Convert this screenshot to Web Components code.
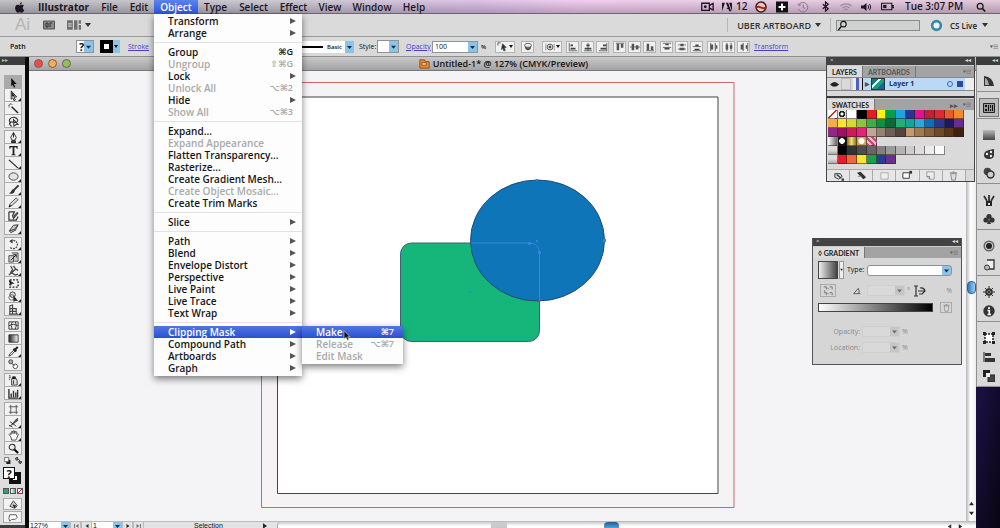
<!DOCTYPE html>
<html lang="en">
<head>
<meta charset="utf-8">
<title>Illustrator</title>
<style>
  body { margin: 0; background: #0d0820; color: #111; font-family: "Open Sans", "Noto Sans", sans-serif; font-size: 10px; }
</style>
</head>
<body>
<illustrator-app></illustrator-app>
<script>
const ICONS = {
  apple: '<path d="M8.600 3.100c-1 0-1.500.6-2.200.6S5 3.100 4 3.100C2.300 3.200 1.200 4.700 1.200 6.700c0 2.300 1.600 4.900 3 4.900.8 0 1.200-.5 2.200-.5s1.300.5 2.100.5c1.200 0 2.200-1.700 2.600-2.900-2.200-1-2-3.700-.1-4.500-.6-.8-1.500-1.100-2.400-1.100zM6.200 2.900C6.200 1.400 7.300.4 8.500.2 8.700 1.600 7.500 2.900 6.200 2.900z" fill="currentColor"/>',
  camera: '<path d="M.7 3h7v6.500h-7zM8 5l3.200-1.800v6L8 7.500" fill="none" stroke="currentColor" stroke-width="1.200"/><circle cx="4" cy="6.200" r="1.300" fill="currentColor"/>',
  adobe: '<path d="M0 11V1h3.500zM12 11V1H8.500zM4.700 1h2.600L11 11H8.700l-1-2.500H5.500L7 6.500z" fill="currentColor"/>',
  globe: '<circle cx="6" cy="6" r="5" fill="#e8c9c0" stroke="#402020" stroke-width="1.600"/><path d="M1 5.500c4-2.500 6 2.500 10 0v2c-4 2.500-6-2.500-10 0z" fill="#b32018"/>',
  spaces: '<path d="M0 .5h12v11H0z" fill="#111"/><path d="M6 2.500v7M2.500 6h7" stroke="#e6d5e3" stroke-width="2"/><path d="M4.500 2v8M7.500 2v8" stroke="#111"/><path d="M6 3v6" stroke="#fff" stroke-width="2"/><path d="M3 6h6" stroke="#fff" stroke-width="2"/>',
  clock: '<path d="M2 3.500A4.800 4.800 0 1 1 1.500 8M1 2.500l1 2.200 2-1M6.200 3.500V6.500L8 7.500" fill="none" stroke="#8b7b8a"/>',
  bt: '<path d="M3 3.500l6 5L6 11V1l3 2.500-6 5" fill="none" stroke="currentColor" stroke-width="1.300"/>',
  wifi: '<path d="M.5 5a8 8 0 0 1 11 0M2.500 7a5 5 0 0 1 7 0M4.300 9a2.500 2.500 0 0 1 3.400 0" fill="none" stroke="#9b8c9a" stroke-width="1.200"/>',
  vol: '<path d="M1 4.500h2.500L6.500 2v8L3.500 7.500H1z" fill="currentColor"/><path d="M8 4.200q1.300 1.800 0 3.600M9.700 3q2 3 0 6" fill="none" stroke="currentColor"/>',
  batt: '<path d="M.5 3h9.500v6H.5zM10.500 5H12v2h-1.500z" fill="none" stroke="currentColor"/><path d="M2 4.500h3v3H2z" fill="currentColor"/>',
  search: '<circle cx="5" cy="5" r="3.500" fill="none" stroke="currentColor" stroke-width="1.500"/><path d="M7.500 7.500l3.500 4" stroke="currentColor" stroke-width="2"/>',
  glass: '<circle cx="7" cy="4.500" r="3" fill="none" stroke="currentColor" stroke-width="1.200"/><path d="M4.800 6.800L1.500 11" stroke="currentColor" stroke-width="1.500"/>',
  select: '<path d="M3.500 1l6 6.500-3 .2L8 11l-1.500.6L5.200 8.500 3.500 10z" fill="#111"/>',
  direct: '<path d="M3.500 1l6 6.500-3 .2L8 11l-1.500.6L5.200 8.500 3.500 10z" fill="#fff" stroke="#222"/><path d="M4 2l4 5H4z" fill="#222"/>',
  wand: '<path d="M4 4l7 7" stroke="#222" stroke-width="1.600"/><path d="M3 0v2M0 3h2M1 1l1 1M5 1L4 2M1 5l1-1" stroke="#555"/>',
  lasso: '<path d="M3 8C-.5 4 3 1 7 1.500s5 5 1 5.500-5-2-6 .5 1 2.500 2 4M6 4l5 5-2 .3L6.500 11z" fill="none" stroke="#333" stroke-width="1.200"/>',
  pen: '<path d="M6 .5L9 6 7.500 9h-3L3 6zM4 9.500h4V12H4z" fill="#eee" stroke="#222"/><path d="M6 1v5" stroke="#222"/><path d="M4 10h4v2H4z" fill="#222"/>',
  type: '<path d="M1.500 1h9v3h-1q0-1.500-1.500-1.500H7V9.500q0 1 1.500 1v.8h-5v-.8q1.500 0 1.500-1v-7H4Q2.500 2.500 2.500 4h-1z" fill="#222"/>',
  line: '<path d="M1 2l10 9" stroke="#222" stroke-width="1.300"/>',
  ellipse: '<ellipse cx="6" cy="6" rx="5" ry="4" fill="#e4e4e4" stroke="#444"/>',
  brush: '<path d="M11.500 1.500L6 7" stroke="#333" stroke-width="2"/><path d="M6.500 5.500q2 2 0 4T1 10q2 0 2.500-2t3-2.500z" fill="#333"/>',
  pencil: '<path d="M1 11l1.500-4L9 1l2 2-6.500 6z" fill="#ddd" stroke="#444"/><path d="M1 11l1-2.500L3.500 10z"/>',
  blob: '<path d="M1 2h6L5 6l1 3 5-6M1 2v9h8l2-4" fill="none" stroke="#333" stroke-width="1.300"/><path d="M5 9l1-3 4-4 1 1-4 5z" fill="#555"/>',
  eraser: '<path d="M1.500 8.500L6 2.500 11 2 8 8l-5 2.500z" fill="#ccc" stroke="#333"/><path d="M1.500 8.500L7 7l4-5M7 7l1 1" stroke="#333" fill="none"/>',
  rotate: '<path d="M3 2.500A4.500 4.500 0 1 1 2 8.500" fill="none" stroke="#444" stroke-width="1.300" stroke-dasharray="2 1"/><path d="M5 0L1.500 2.500 5 5z" fill="#333"/>',
  scale: '<path d="M1 4h5v7H1zM4 1h7v9H7" fill="#ccc" stroke="#444"/><path d="M3 9l6-6M9 3v3M9 3H6" stroke="#222"/>',
  warp: '<path d="M1 11L8 5M3 1l2 4-2 3 5 3 3-1M6 1l2 3 3 2" fill="none" stroke="#444" stroke-width="1.400"/>',
  free: '<path d="M2 2h9v8H2z" fill="none" stroke="#222" stroke-width="1.500" stroke-dasharray="2 1.500"/><path d="M1 2l6 4-3 .5L3 9z" fill="#222"/>',
  shape: '<circle cx="5" cy="4" r="3" fill="#ddd" stroke="#333"/><circle cx="4" cy="7" r="3" fill="none" stroke="#666"/><path d="M6 5l5 6-3-.5L6 12z" fill="#222"/>',
  graph: '<path d="M2 11V2l3-1v10M5 5h4v6M1 11h10M2 5h3M2 8h7" fill="none" stroke="#444" stroke-width="1.200"/>',
  mesh: '<path d="M1 2h10v8H1zM4.500 2q-2 4 0 8M8 2q2 4 0 8M1 6q5-2.500 10 0" fill="#eee" stroke="#333"/>',
  grad: '<linearGradient id="a"><stop stop-color="#222"/><stop offset="1" stop-color="#fff"/></linearGradient><path d="M1 2h10v8H1z" fill="url(#a)" stroke="#333"/>',
  drop: '<path d="M1 11l1-2.500L7 4l1 1-4.500 5z" fill="#eee" stroke="#333"/><path d="M6 3l3 3M8 4l2.500-3" stroke="#222" stroke-width="2.400"/>',
  blend: '<circle cx="3" cy="3" r="2.200" fill="#aaa" stroke="#444"/><circle cx="8" cy="8" r="2.500" fill="#fff" stroke="#444"/><path d="M4 5l3 2" stroke="#444"/>',
  spray: '<path d="M4 4h5l1 2v5H4z" fill="#ddd" stroke="#333"/><path d="M5 4V2h3v2M1 1h2M1 3h2M1 5h1M6 6v4" stroke="#333"/>',
  bars: '<path d="M1 1v10h10M3.500 10V6M6 10V3M8.500 10V5M10.500 10V2" stroke="#333" stroke-width="1.500" fill="none"/>',
  board: '<path d="M3 1v10M9 1v10M1 3h10M1 9h10" stroke="#555"/>',
  slice: '<path d="M1 11L9 2l2-1v3L6 8z" fill="#555"/><path d="M2 5l7 5M1 9l4 2" stroke="#333"/>',
  hand: '<path d="M3 7L1 5l1-1 1.500 1V2L5 1.500 5.500 4V1H7l.5 3L8 1.500l1.500.5V5l1-1 .8 1L9.500 9l-1 2H4z" fill="#fff" stroke="#444"/>',
  zoom: '<circle cx="4.500" cy="4.500" r="3.200" fill="#eee" stroke="#333" stroke-width="1.200"/><path d="M7 7l4 4" stroke="#111" stroke-width="2.400"/>',
  solid: '<path d="M3 8l4-6 4 5q-1 3-3 3z" fill="#ccc" stroke="#444"/><path d="M6 6l4 1-2 3z" fill="#222"/>',
  screen: '<path d="M3 3h7l1 3-2 2H5l-2 2-1-3z" fill="#fff" stroke="#555"/>',
  br: '<path d="M.5 2h11v8H.5z" fill="#8a8a8a" stroke="#555"/><path d="M3 4h2v4H3zM7 8V4h2" fill="none" stroke="#333"/>',
  layout: '<path d="M0 2h5v8H0zM6 2h3v8H6zM10 2h2v3h-2zM10 6h2v4h-2z" fill="#707070"/><path d="M1 5h3M1 7h3" stroke="#ccc"/>',
  ring: '<circle cx="6" cy="6" r="4" fill="#e8f3f7" stroke="#3689a3" stroke-width="2.400"/>',
  similar: '<path d="M1 2h3M1 2v3M6 3l4 4-2 .3 1 3-1.500.5-1-2.800L5 9.300z" fill="#222" stroke="#555"/>',
  mask: '<path d="M2 4q0 6 4 6t4-6z" fill="#555"/><ellipse cx="6" cy="4" rx="4" ry="2.500" fill="#eee" stroke="#555"/>',
  recolor: '<circle cx="6" cy="6" r="3.500" fill="#ddd" stroke="#444"/><path d="M1 2v8M11 2v8" stroke="#888"/><circle cx="6" cy="6" r="1.500" fill="#444"/>',
  al1: '<path d="M1.500 1v10M2 10.500h9" stroke="#555"/><path d="M3 3h3v2H3zM3 7h6v2H3z" fill="#444"/>',
  al2: '<path d="M6 1v10M1 10.500h10" stroke="#555"/><path d="M4 3h4v2H4zM2 7h8v2H2z" fill="#444"/>',
  al3: '<path d="M10.500 1v10M1 10.500h10" stroke="#555"/><path d="M6 3h4v2H6zM3 7h7v2H3z" fill="#444"/>',
  al4: '<path d="M1 1.500h10" stroke="#555"/><path d="M2 2h3v8H2zM7 2h3v5H7z" fill="#555"/>',
  al5: '<path d="M0 6h12" stroke="#555"/><path d="M2 2h3v8H2zM7 4h3v5H7z" fill="#555"/>',
  al6: '<path d="M1 10.500h10" stroke="#555"/><path d="M2 2h3v8H2zM7 5h3v5H7z" fill="#555"/>',
  di1: '<path d="M1 1.500h10M1 6.500h10" stroke="#555"/><path d="M4 2h4v2H4zM3 7h6v2H3z" fill="#444"/>',
  di2: '<path d="M1 3.500h10M1 8.500h10" stroke="#777"/><path d="M4 2h4v3H4zM3 7h6v3H3z" fill="#555"/>',
  di3: '<path d="M1 5.500h10M1 10.500h10" stroke="#555"/><path d="M4 3h4v2H4zM3 8h6v2H3z" fill="#444"/>',
  di4: '<path d="M2 1v10M7.500 1v10" stroke="#444"/><path d="M2 3h3v6H2zM8 4h2v4H8z" fill="#555"/>',
  di5: '<path d="M3.500 1v10M8.500 1v10" stroke="#444"/><path d="M2 3h3v6H2zM7 4h3v4H7z" fill="#555"/>',
  di6: '<path d="M5 1v10M10.500 1v10" stroke="#444"/><path d="M2 3h3v6H2zM8 4h2v4H8z" fill="#555"/>',
  menu: '<path d="M0 4h4L2 7zM5 3h7M5 5.500h7M5 8h7" stroke="#777" fill="#555"/>',
  guide: '<path d="M1 11V1q9 1 10 10z" fill="#333"/><path d="M2 10V3q3 1 4 7z" fill="#aaa"/>',
  swatch: '<path d="M.5 1.500h11v9H.5z" fill="#999" stroke="#222"/><path d="M2 3h2v2H2zM2 7h2v2H2zM5 3h1v6H5zM7 3h1v3H7zM9 3h1v6H9zM7 7h1v2H7z" fill="#111"/>',
  stroke: '<linearGradient id="s" x2="0" y2="1"><stop stop-color="#bbb"/><stop offset="1" stop-color="#444"/></linearGradient><path d="M0 1h12v10H0z" fill="url(#s)"/>',
  palette: '<path d="M1 7q0-4 5-5l5-1v6q0 4-5 4T1 7z" fill="#333"/><circle cx="4" cy="6" r="1.200" fill="#eee"/><circle cx="8" cy="4" r="1.200" fill="#eee"/><circle cx="8" cy="8" r="1.200" fill="#eee"/>',
  transp: '<circle cx="4.500" cy="4.500" r="3.800" fill="#444"/><circle cx="7.500" cy="7.500" r="3.500" fill="#ccc" stroke="#333" stroke-width="1.400"/>',
  brushes: '<path d="M3 7h6v5H3z" fill="#222"/><path d="M5 9h2v2H5z" fill="#ddd"/><path d="M4 7L1 2M6 7V1M8 7l3-5" stroke="#333" stroke-width="1.800"/>',
  club: '<circle cx="6" cy="3.500" r="2.600" fill="#333"/><circle cx="3" cy="7" r="2.600" fill="#333"/><circle cx="9" cy="7" r="2.600" fill="#333"/><path d="M4 11l2-5 2 5z" fill="#333"/>',
  look: '<circle cx="6" cy="6" r="4.800" fill="#ccc" stroke="#666" stroke-width="1.500"/><circle cx="6" cy="6" r="3" fill="#222"/>',
  styles: '<path d="M4 1h7v9H5" fill="#eee" stroke="#333" stroke-width="1.300"/><circle cx="4" cy="8.500" r="2.500" fill="#bbb" stroke="#333"/>',
  nav: '<circle cx="6" cy="6" r="3" fill="none" stroke="#333" stroke-width="1.500"/><path d="M6 0v12M0 6h12M2 2l8 8M10 2l-8 8" stroke="#333"/>',
  info: '<circle cx="6" cy="6" r="5.700" fill="#333"/><path d="M6 2v2M4.500 5.500H6.300V9.500M4.500 9.500h3.500" stroke="#fff" stroke-width="1.600" fill="none"/>',
  transform: '<path d="M2 2h8v8H2z" fill="#fff" stroke="#222" stroke-width="1.500" stroke-dasharray="2 1"/><path d="M0 0h3v3H0zM9 0h3v3H9zM0 9h3v3H0zM9 9h3v3H9z" fill="#222"/>',
  align: '<path d="M1 1v10" stroke="#222"/><path d="M2 2h6v3H2zM2 7h10v4H2z" fill="#333"/>',
  path: '<path d="M0 0h7v7H0z" fill="#222"/><path d="M5 5h7v7H5z" fill="#444" stroke="#222"/><path d="M3 3h4v4H3z" fill="#eee"/>',
  doc: '<path d="M1 2h5l1 2h4v7H1z" fill="#f09030" stroke="#8a4510"/><path d="M3 5h5v3H3z" fill="#f8c890" stroke="#a05010"/>',
  eye: '<path d="M0 6q6-7 12 0-6 6-12 0z" fill="#222"/>',
  libs: '<path d="M2 4h6l2 3-4 3-4-2z" fill="#ddd" stroke="#333"/><path d="M4 5l5 4M10 10h2v1h-2z" stroke="#333" stroke-width="1.300"/>',
  kind: '<path d="M1 3l4-1 6 6-3 2z" fill="#333"/><path d="M2 7h4" stroke="#888"/>',
  opts: '<path d="M2 3h8v7H2z" fill="#eee" stroke="#aaa"/>',
  folder: '<path d="M1 3h7v6H1z" fill="#fff" stroke="#333"/><path d="M8 1h3v3H8z" fill="#333"/>',
  add: '<path d="M2 2h8v8H5L2 7z" fill="#eee" stroke="#999"/><path d="M2 7h3v3" stroke="#777" fill="none"/>',
  trash: '<path d="M3 4h6l-1 7H4zM2 3h8M5 2h2" fill="#ddd" stroke="#888"/>',
  angle: '<path d="M1 10h10M1 10L8 2q2 4 1 8" fill="none" stroke="#444" stroke-width="1.200"/>',
  aspect: '<path d="M2 1v10M0 1h4M0 11h4M4 6h7M6 3q4-1 5 3l-3 3H5" fill="none" stroke="#333" stroke-width="1.200"/>',
  reverse: '<path d="M1 1h3v3M8 1h3v3M1 8h3v3M8 8h3v3M2 5v2M5 2l2 2M5 8l2 2" fill="none" stroke="#666"/>',
  reset: '<path d="M4 5h7v7H4z" fill="#222"/><path d="M1 1h7v7H1z" fill="#fff" stroke="#222"/>',
  swap: '<path d="M2 3q7 0 7 8M4 0L0 3l4 3zM6 8h6l-3 4z" stroke="#222" stroke-width="1.400" fill="none"/>',
  left: '<path d="M9 2v8L3 6z" fill="#333"/>',
  right: '<path d="M3 2v8l6-4z" fill="#222"/>',
  up: '<path d="M2 9h8L6 3z" fill="#222"/>',
  down: '<path d="M2 3h8L6 9z" fill="#222"/>',
  first: '<path d="M11 2v8L5 6z" fill="#777"/><path d="M3 2v8" stroke="#777" stroke-width="2"/>',
  last: '<path d="M1 2v8l6-4z" fill="#777"/><path d="M9 2v8" stroke="#777" stroke-width="2"/>'
};
const icon = (name, w = 12, h = w) => `<svg viewBox="0 0 12 12" width="${w}" height="${h}" aria-hidden="true">${ICONS[name]}</svg>`;

const BASE = `
  *, *::before { box-sizing: border-box; }
  svg { display: block; flex: none; }
  button { appearance: none; border: 0; padding: 0; margin: 0; background: none; color: inherit; font: inherit; display: flex; align-items: center; justify-content: center; }
  input, select { appearance: none; margin: 0; border: 1px solid #8d9399; border-radius: 0; background: #fff; font: inherit; color: inherit; padding: 0 2px; min-width: 0; }
  select { background: url("data:image/svg+xml,%3Csvg xmlns='http://www.w3.org/2000/svg' width='9' height='12'%3E%3Crect width='9' height='12' fill='%238cc4e6'/%3E%3Cpath d='M2 5h5L4.500 8z' fill='%23102a50'/%3E%3C/svg%3E") right center no-repeat #fff; }
  a { color: #4a3fc4; }
`;
function component(name, template) {
  customElements.define(name, class extends HTMLElement {
    connectedCallback() {
      if (this.shadowRoot) return;
      const t = document.createElement('template');
      t.innerHTML = typeof template === 'function' ? template(this) : template;
      const style = document.createElement('style');
      style.textContent = BASE;
      const root = this.attachShadow({ mode: 'open' });
      root.append(style, t.content.cloneNode(true));
    }
  });
}

component('menu-entry', el => {
  const sub = el.hasAttribute('submenu');
  return `<style>
    :host { display: block; position: relative; height: 12px; }
    button { width: 100%; height: 12px; padding: 0 6px 0 14px; justify-content: space-between; font-size: 10px; line-height: 12px; font-weight: 600; color: #151515; white-space: nowrap; }
    :host([off]) button { color: #a9a9a9; }
    :host([active]) button { background: linear-gradient(#5177e4, #2a50d0); color: #fff; }
    kbd { font: 600 9px/12px "Open Sans", "DejaVu Sans", sans-serif; padding-right: 3px; }
    i { border-left: 6px solid #555; border-top: 3px solid transparent; border-bottom: 3px solid transparent; }
    :host([active]) i { border-left-color: #fff; }
    ::slotted(drop-menu) { position: absolute; left: 100%; top: 0; }
  </style>
  <button type="button" role="menuitem" ${el.hasAttribute('off') ? 'disabled' : ''}><span><slot></slot></span>${sub ? '<i></i>' : ''}${el.getAttribute('keys') ? `<kbd>${el.getAttribute('keys')}</kbd>` : ''}</button><slot name="sub"></slot><slot name="pointer"></slot>`;
});
component('menu-rule', `<style>:host { display: block; height: 7px; padding-top: 3px; } hr { border: 0; border-top: 1px solid #e2e2e2; margin: 0; }</style><hr>`);
component('drop-menu', `<style>:host { display: block; background: #fdfdfd; box-shadow: 0 3px 7px rgba(0,0,0,.5); padding-bottom: 2px; }</style><div role="menu"><slot></slot></div>`);
component('mouse-pointer', `<style>:host { position: absolute; display: block; left: 41px; top: 4px; z-index: 3; }</style>
  <svg width="8" height="11" viewBox="0 0 8 11"><path d="M1 .5v8.500l2-1.700 1.400 3 1.500-.7-1.300-2.800H7z" fill="#111" stroke="#dde" stroke-width=".6"/></svg>`);

component('menu-title', `<style>
    :host { display: block; position: relative; }
    button { height: 14px; padding: 0 6px; font-size: 10px; line-height: 13px; font-weight: 600; white-space: nowrap; width: 100%; }
    :host([app]) button { font-weight: 700; }
    :host([open]) button { background: linear-gradient(#5a83ee, #2e55d8); color: #fff; }
    ::slotted(drop-menu) { position: absolute; left: 0; top: 14px; width: 148px; padding-top: 1px; }
  </style><button type="button" aria-haspopup="menu"><slot></slot></button><slot name="menu"></slot>`);

component('system-bar', `<style>
    :host { display: block; position: relative; z-index: 20; color: #1d1620; }
    header { display: flex; justify-content: space-between; height: 14px; border-bottom: 1px solid #6b6570;
      background: linear-gradient(rgba(255,255,255,.2), rgba(60,50,70,.25)), linear-gradient(90deg, #b4b4b8 0, #c0bcc8 30%, #d5b6e0 48%, #edc4ea 58%, #e4c3de 75%, #dbbdd2 100%); }
    nav { display: grid; grid-template-columns: 32px 63px 29px 30px 44px 35px 41px 39px 34px 50px 34px; }
    nav > button { padding-left: 6px; }
    .status { display: grid; grid-template-columns: 21px 33px 21px 21px 23px 20px 20px 21px 24px 71px 24px; align-items: center; height: 13px; }
    .status span { display: flex; align-items: center; gap: 4px; font-size: 10px; font-weight: 600; line-height: 13px; white-space: nowrap; }
    .status button { justify-content: start; }
  </style>
  <header>
    <nav>
      <button type="button" aria-label="Apple menu">${icon('apple', 11)}</button>
      <menu-title app>Illustrator</menu-title><menu-title>File</menu-title><menu-title>Edit</menu-title>
      <menu-title open>Object<drop-menu slot="menu">
        <menu-entry submenu>Transform</menu-entry><menu-entry submenu>Arrange</menu-entry><menu-rule></menu-rule>
        <menu-entry keys="⌘G">Group</menu-entry><menu-entry off keys="⇧⌘G">Ungroup</menu-entry><menu-entry submenu>Lock</menu-entry>
        <menu-entry off keys="⌥⌘2">Unlock All</menu-entry><menu-entry submenu>Hide</menu-entry><menu-entry off keys="⌥⌘3">Show All</menu-entry><menu-rule></menu-rule>
        <menu-entry>Expand...</menu-entry><menu-entry off>Expand Appearance</menu-entry><menu-entry>Flatten Transparency...</menu-entry><menu-entry>Rasterize...</menu-entry>
        <menu-entry>Create Gradient Mesh...</menu-entry><menu-entry off>Create Object Mosaic...</menu-entry><menu-entry>Create Trim Marks</menu-entry><menu-rule></menu-rule>
        <menu-entry submenu>Slice</menu-entry><menu-rule></menu-rule>
        <menu-entry submenu>Path</menu-entry><menu-entry submenu>Blend</menu-entry><menu-entry submenu>Envelope Distort</menu-entry><menu-entry submenu>Perspective</menu-entry>
        <menu-entry submenu>Live Paint</menu-entry><menu-entry submenu>Live Trace</menu-entry><menu-entry submenu>Text Wrap</menu-entry><menu-rule></menu-rule>
        <menu-entry submenu active>Clipping Mask<drop-menu slot="sub" style="width:101px">
          <menu-entry active keys="⌘7">Make<mouse-pointer slot="pointer"></mouse-pointer></menu-entry><menu-entry off keys="⌥⌘7">Release</menu-entry><menu-entry off>Edit Mask</menu-entry>
        </drop-menu></menu-entry>
        <menu-entry submenu>Compound Path</menu-entry><menu-entry submenu>Artboards</menu-entry><menu-entry submenu>Graph</menu-entry>
      </drop-menu></menu-title>
      <menu-title>Type</menu-title><menu-title>Select</menu-title><menu-title>Effect</menu-title><menu-title>View</menu-title><menu-title>Window</menu-title><menu-title>Help</menu-title>
    </nav>
    <div class="status">
      <span>${icon('camera', 13)}</span><span>${icon('adobe', 10)}12</span><span>${icon('globe')}</span><span>${icon('spaces')}</span><span>${icon('clock')}</span><span>${icon('bt', 11)}</span>
      <span>${icon('wifi')}</span><span>${icon('vol')}</span><span>${icon('batt', 13)}</span><span>Tue 3:07 PM</span><button type="button" aria-label="Spotlight">${icon('search', 10)}</button>
    </div>
  </header>`);

component('app-bar', `<style>
    :host { display: block; }
    div { display: flex; align-items: center; height: 23px; background: #dadada; border-bottom: 1px solid #9a9a9a; padding: 0 12px 0 15px; }
    b { font: 400 17px/20px "Liberation Sans", sans-serif; color: #b4b4b4; width: 28px; }
    .l { gap: 4px; width: 24px; justify-content: flex-start; }
    .caret { border-top: 4px solid #333; border-left: 3px solid transparent; border-right: 3px solid transparent; }
    .ws { margin-left: auto; border-left: 1px solid #b5b5b5; height: 14px; padding: 0 9px; gap: 4px; font-size: 9px; font-weight: 600; color: #333; border-right: 1px solid #b5b5b5; }
    label { display: flex; align-items: center; width: 84px; height: 11px; margin: 0 10px 0 5px; border: 1px solid #8b8b8b; background: #d0d2d2; }
    label input { flex: 1; border: 0; background: none; height: 9px; }
    .cs { gap: 7px; font-size: 8px; font-weight: 600; color: #222; }
    .cs .caret { margin-left: -2px; }
  </style>
  <div><b>Ai</b><button class="l" type="button" aria-label="Bridge">${icon('br', 12, 14)}</button>
  <button class="l" type="button" aria-label="Arrange documents">${icon('layout', 14)}<i class="caret"></i></button>
  <button class="ws" type="button">UBER ARTBOARD <i class="caret"></i></button>
  <label aria-label="Search">${icon('glass', 11)}<input type="text" aria-label="Search help"></label>
  <button class="cs" type="button">${icon('ring', 13)}CS Live <i class="caret"></i></button></div>`);

component('control-bar', `<style>
    :host { display: block; }
    form { display: flex; align-items: center; height: 20px; background: #d9d9d9; border-bottom: 1px solid #8e8e8e; padding: 0 2px 0 10px; font-size: 7px; line-height: 10px; font-weight: 600; }
    form > * { flex: none; }
    form > a { font-weight: 400; }
    .kind { width: 66px; }
    .fill { width: 18px; height: 13px; font-size: 11px; font-weight: 700; line-height: 11px; margin-right: 6px; }
    .line { display: flex; align-items: center; justify-content: flex-start; width: 20px; height: 13px; margin-right: 8px; background: #8cc4e6; }
    .line::before { content: ""; width: 13px; height: 13px; border: 4px solid #000; background: #fff; }
    .line i { margin-left: 1px; border-top: 3px solid #111; border-left: 2px solid transparent; border-right: 2px solid transparent; }
    form > .stroke { width: 22px; }
    .width { width: 60px; height: 12px; margin: 0 60px 0 4px; }
    .basic { display: flex; align-items: center; width: 80px; height: 12px; background: #fff; margin-right: 5px; }
    .basic::before { content: ""; width: 49px; height: 2px; background: #000; }
    .basic select { border: 0; width: 31px; height: 12px; padding: 0 0 0 4px; font-size: 6px; }
    .style { width: 18px; font-weight: 400; } .sty { width: 22px; height: 13px; margin-right: 7px; }
    .opa { width: 26px; } .pct { width: 46px; height: 12px; font-weight: 400; }
    .unit { width: 17px; padding-left: 3px; font-size: 6px; }
    .set { display: flex; gap: 2px; margin-right: 4px; }
    .set button { width: 13px; height: 12px; background: #f1f1f1; border: 1px solid #b3b3b3; }
    .set .w { width: 20px; gap: 1px; }
    .set .w:not(:last-child), .gap { margin-right: 4px; }
    .gap { margin-right: 8px; }
    .w i { border-top: 3px solid #111; border-left: 2px solid transparent; border-right: 2px solid transparent; }
    .more { margin-left: auto; }
  </style>
  <form>
    <span class="kind">Path</span>
    <select class="fill" aria-label="Fill"><option>?</option></select>
    <button type="button" class="line" aria-label="Stroke colour"><i></i></button>
    <a class="stroke" href="#stroke">Stroke</a><select class="width" aria-label="Stroke width"><option></option></select>
    <span class="basic"><select aria-label="Brush"><option>Basic</option></select></span>
    <label class="style" for="sty">Style:</label><select id="sty" class="sty"><option></option></select>
    <a class="opa" href="#opacity">Opacity</a><select class="pct" aria-label="Opacity"><option>100</option></select><span class="unit">%</span>
    <span class="set gap"><button class="w" type="button" aria-label="Select similar">${icon('similar', 11)}<i></i></button><button type="button" aria-label="Isolate">${icon('mask', 10)}</button></span>
    <span class="set"><button class="w" type="button" aria-label="Align to">${icon('recolor', 10)}<i></i></button></span>
    ${[['al1','al2','al3'],['al4','al5','al6'],['di1','di2','di3'],['di4','di5','di6']].map(g => `<span class="set">${g.map(n => `<button type="button" aria-label="Align">${icon(n, 10)}</button>`).join('')}</span>`).join('')}
    <a href="#transform">Transform</a>
    <button type="button" class="more" aria-label="Panel menu">${icon('menu', 8)}</button>
  </form>`);

component('tool-palette', `<style>
    :host { display: flex; flex-direction: column; width: 25px; background: #dedede; }
    header, footer { background: #3c3c3c; height: 8px; color: #bbb; font-size: 6px; line-height: 7px; }
    header { padding-left: 2px; }
    .tools { display: flex; flex-direction: column; gap: 3px; padding: 10px 0 1px 4px; }
    .group { display: grid; width: 18px; }
    .group button { height: 13px; border: 1px solid #aaa; border-width: 1px 1px 0; background: #f1f1f1; position: relative; }
    .group button:last-child { box-shadow: 0 1px #aaa; }
    .group .on { background: #aaa; }
    .more::before { content: ""; position: absolute; right: 0; bottom: 0; border-left: 3px solid transparent; border-bottom: 3px solid #222; }
    .mini { display: flex; gap: 4px; padding: 2px 0 0 4px; height: 12px; }
    .paint { display: grid; height: 20px; padding-left: 3px; }
    .paint > * { grid-area: 1 / 1; }
    .paint .f { width: 12px; height: 12px; background: #fff; border: 1px solid #111; font-size: 11px; font-weight: 700; line-height: 11px; z-index: 1; }
    .paint .s { width: 12px; height: 12px; margin: 5px 0 0 6px; border: 4px solid #111; background: #fff; }
    .modes { display: flex; padding: 1px 0 2px 3px; gap: 1px; }
    .modes button { width: 6px; height: 6px; border: 1px solid #555; }
    .view { display: grid; gap: 1px; padding: 2px 0 2px 3px; width: 22px; }
    .view button { height: 12px; border: 1px solid #aaa; background: #f3f3f3; }
    footer { margin-top: auto; height: 5px; }
  </style>
  <header>▸▸</header>
  <div class="tools">${[['select','direct','wand','lasso'],['pen','type','line','ellipse','brush','pencil','blob','eraser'],['rotate','scale','warp','free','shape','graph'],['mesh','grad','drop','blend'],['spray','bars'],['board','slice','hand','zoom']]
    .map(g => `<div class="group">${g.map(n => `<button type="button" aria-label="${n} tool" class="${n === 'select' ? 'on' : ['wand','lasso','free','mesh','grad','blend','board','zoom','blob'].includes(n) ? '' : 'more'}">${icon(n, 11)}</button>`).join('')}</div>`).join('')}</div>
  <div class="mini">${icon('reset', 7)}${icon('swap', 7)}</div>
  <div class="paint"><button type="button" class="f" aria-label="Fill">?</button><button type="button" class="s" aria-label="Stroke"></button></div>
  <div class="modes"><button type="button" aria-label="Color" style="background:#27a56f"></button><button type="button" aria-label="Gradient" style="background:linear-gradient(90deg,#fff,#5aa98c)"></button><button type="button" aria-label="None" style="background:linear-gradient(135deg,#fff 40%,#c22 40%,#c22 60%,#fff 60%)"></button></div>
  <div class="view"><button type="button" aria-label="Draw mode">${icon('solid', 11)}</button><button type="button" aria-label="Screen mode">${icon('screen', 11)}</button></div>
  <footer></footer>`);

component('art-canvas', `<style>
    :host { display: block; position: relative; overflow: hidden; background: #f4f3f5; }
    svg { position: absolute; left: 232px; top: 11px; }
  </style>
  <svg width="474" height="428" viewBox="261 82 474 428" role="img" aria-label="Artboard with a green rounded rectangle and a blue ellipse">
    <path d="M261.500 82.500H734V507.500H261.500z" fill="#f6f3f5" stroke="#c9686b"/>
    <path d="M277.500 97H718V493.500H277.500z" fill="#fff" stroke="#454545"/>
    <rect x="400.500" y="243" width="139" height="98.500" rx="11" fill="#16b67b" stroke="#3b6470"/>
    <ellipse cx="537.500" cy="240.500" rx="67" ry="60.500" fill="#0e76b8" stroke="#254b70"/>
    <path d="M471 243h58q10 0 10.500 10V301" fill="none" stroke="#3985d6"/>
    <path d="M528 242h3v3h-3zM538 251h3v3h-3zM536 240h2v2h-2zM603 239h3v3h-3zM469 291h2v2h-2zM536 179h2v2h-2zM400 252h2v2h-2z" fill="#3a82dd"/>
  </svg>`);

component('document-window', `<style>
    :host { display: grid; grid-template: 14px 1fr 9px / 1fr 10px; border-left: 4px solid #0a0a0a; min-width: 0; }
    header { grid-column: 1 / 3; display: grid; grid-template-columns: 1fr auto 1fr; align-items: center; background: linear-gradient(#c9c9c9, #a3a3a3); border-bottom: 1px solid #777; padding-left: 5px; }
    .lights { display: flex; gap: 5px; }
    .lights button { width: 9px; height: 9px; border-radius: 50%; border: 1px solid #855; }
    h1 { margin: 0; display: flex; align-items: center; gap: 3px; font-size: 9px; line-height: 13px; font-weight: 600; white-space: nowrap; padding-right: 3px; }
    .v { display: flex; flex-direction: column; align-items: center; gap: 3px; padding-bottom: 4px; background: linear-gradient(90deg, #c8c8c8, #fff 40%, #eee); border-left: 1px solid #bbb; }
    .v b { margin-top: 210px; margin-bottom: auto; width: 9px; height: 13px; border-radius: 4px; background: linear-gradient(90deg, #3377c0, #9fd2f4); border: 1px solid #2562a0; }
    footer { grid-column: 1 / 3; display: flex; align-items: center; overflow: hidden; background: #e3e3e3; border-top: 1px solid #bbb; font: 7px/8px "Liberation Sans", sans-serif; }
    footer select { width: 41px; height: 8px; border: 0; padding: 0 1px; line-height: 8px; }
    .nav { display: flex; } .nav button { width: 11px; height: 8px; border: 1px solid #bbb; border-width: 0 1px; }
    footer p { margin: 0 0 0 50px; width: 67px; line-height: 8px; }
    .h { flex: 1; display: flex; align-items: center; height: 8px; margin-left: 8px; background: linear-gradient(#ccc, #fff 50%); border-left: 1px solid #aaa; border-radius: 4px 0 0; }
    .h i { margin-left: 213px; width: 16px; height: 8px; background: #cacaca; }
    .h b { margin-left: 97px; width: 15px; height: 8px; border-radius: 4px 4px 0 0; background: linear-gradient(#205a94, #65b9e9); }
    .h span { margin-left: auto; display: flex; gap: 4px; padding-right: 12px; }
  </style>
  <header><div class="lights"><button type="button" aria-label="Close" style="background:#e2504c"></button><button type="button" aria-label="Minimize" style="background:#f3b052"></button><button type="button" aria-label="Zoom" style="background:#83c65c"></button></div>
    <h1>${icon('doc', 11)}Untitled-1* @ 127% (CMYK/Preview)</h1></header>
  <art-canvas></art-canvas>
  <div class="v"><b></b>${icon('up', 7)}${icon('down', 7)}</div>
  <footer><select aria-label="Zoom level"><option>127%</option></select><span class="nav"><button type="button" aria-label="First">${icon('first', 6)}</button><button type="button" aria-label="Previous">${icon('left', 6)}</button></span>
    <select aria-label="Artboard" style="width:30px"><option>1</option></select><span class="nav"><button type="button" aria-label="Next">${icon('right', 6)}</button><button type="button" aria-label="Last">${icon('last', 6)}</button></span>
    <p>Selection</p>${icon('right', 8)}<div class="h"><i></i><b></b><span>${icon('left', 7)}${icon('right', 7)}</span></div></footer>`);

component('panel-dock', `<style>
    :host { display: flex; flex-direction: column; width: 24px; background: linear-gradient(100deg, #0d0820, #191040 60%, #080510); }
    header { height: 8px; background: #3c3c3c; color: #ccc; font-size: 6px; line-height: 6px; text-align: right; padding-right: 2px; }
    .group { display: grid; justify-items: center; padding: 6px 0 1px; background: #d8d8d8; border: 1px solid #8f8f8f; border-width: 0 0 1px 1px; }
    button { width: 20px; height: 19px; }
    .on { border: 1px solid #777; background: #bdbdbd; }
  </style>
  <header>◂◂</header>
  ${[['guide'],['swatch'],['stroke','palette','transp'],['brushes','club'],['look','styles'],['nav','info'],['transform','align','path']].map(g => `<div class="group">${g.map(n => `<button type="button" aria-label="${n} panel" class="${n === 'swatch' ? 'on' : ''}">${icon(n)}</button>`).join('')}</div>`).join('')}`);

const tabs = (names, extra = '') => `<div class="tabs" role="tablist">${names.map((n, i) => `<button type="button" role="tab" aria-selected="${!i}">${n}</button>`).join('')}<button type="button" class="more" aria-label="Panel menu">${extra}${icon('menu', 8)}</button></div>`;
const TABS = `.tabs { display: flex; height: 12px; background: #a3a3a3; border-top: 1px solid #ccc; }
    .tabs button { padding: 0 5px; font: 700 7px/10px Lato, sans-serif; color: #555; border-right: 1px solid #777; white-space: nowrap; }
    .tabs button[aria-selected=true] { background: #dcdcdc; color: #222; }
    .tabs .more { margin-left: auto; border: 0; padding: 0 3px; gap: 5px; }
    .bar { display: flex; justify-content: space-between; height: 8px; padding: 0 3px; background: #434343; color: #ddd; font-size: 6px; line-height: 6px; }`;

const c = s => s.split(' ').map(v => '#' + v);
const rows = [
  ['linear-gradient(135deg,#fff 42%,#d22 42% 58%,#fff 58%)', 'radial-gradient(circle,#fff 25%,#222 30% 55%,#ddd 60%)', ...c('fff 000 e41b23 fff21a 00a04e 18a6df 2b3490 e4118a bd2430 dd2a2e ea5a2a f38a2c')],
  c('f2ad4c fae62e d2dc30 8ac440 3ab04a 0b9044 0b6838 25b073 0fa79b 2aa8df 0b70b8 2c3590 1d1765 642d8f'),
  c('90288a a00f62 cf195c e5217b bfa893 96826f 6e5f54 50453f c49a6c a37a50 88603a 704a26 5a3518 3f210e'),
  ['linear-gradient(90deg,#fff,#666)', 'radial-gradient(circle,#fff 45%,#111 55%)', 'linear-gradient(90deg,#8a6a20,#f6df78,#9a7020)', 'radial-gradient(circle,#fff 40%,#c9a060 60%)', 'repeating-linear-gradient(45deg,#c44a72 0 2px,#efb8cc 2px 4px)'],
  ['linear-gradient(#ddd 50%,#aaa)', ...c('000 333 4d4d4d 666 808080 999 b3b3b3 ccc ddd ececec fafafa')],
  ['linear-gradient(#ddd 50%,#aaa)', ...c('e81c2a f0683a f7e62f 10a351 2b3c98 6b2f90')]
];
component('layers-panel', `<style>
    :host { display: block; width: 149px; background: #d9d9d9; border: 1px solid #444; border-top: 0; }
    ${TABS}
    .layer { display: grid; grid-template-columns: 14px 10px 11px 9px 14px 1fr 10px 17px; align-items: center; height: 13px; font-size: 7px; line-height: 12px; font-weight: 700; border-top: 1px solid #888; color: #1c2f5c; }
    .layer > * { height: 100%; }
    .layer svg { justify-self: center; align-self: center; height: 9px; }
    .box { border: 1px solid #bbb; } .bar2 { border-right: 3px solid #4b62c4; background: #eee; margin: 1px 3px 1px 2px; }
    .tri { background: #b9d9f6; font-size: 6px; color: #555; padding-left: 2px; border-left: 1px solid #111; }
    .thumb { background: linear-gradient(135deg, #157a70 30%, #dff 30% 45%, #18a07c 45% 65%, #1067a8 65%); border: 1px solid #333; }
    .name { background: #b9d9f6; padding-left: 4px; }
    .target { background: #b9d9f6; display: flex; align-items: center; }
    .target::before { content: ""; width: 6px; height: 6px; border: 1px solid #46a; border-radius: 50%; }
    .mark { background: linear-gradient(90deg, #b9d9f6 8px, #eee 8px); display: flex; align-items: center; }
    .mark::before { content: ""; width: 6px; height: 6px; background: #2b4a9c; }
    .rest { height: 8px; border-top: 1px solid #888; border-bottom: 2px solid #3c3c3c; }
    .grid { padding: 0 10px 0 1px; background: #dadada; }
    .row { display: grid; grid-template-columns: repeat(14, 1fr); height: 9px; }
    .row button { border: 1px solid rgba(40,30,30,.55); border-width: 0 1px 1px 0; background: var(--c); }
    .tools { display: grid; grid-template-columns: repeat(6, 1fr) 8px; height: 12px; margin-top: 5px; border-top: 1px solid #aaa; }
    .tools button { border-right: 1px solid #aaa; background: #e6e6e6; }
  </style>
  <div class="bar"><span>×</span><span>◂◂</span></div>
  ${tabs(['LAYERS', 'ARTBOARDS'])}
  <div class="layer">${icon('eye', 9)}<span class="box"></span><span class="bar2"></span><span class="tri">▶</span><span class="thumb"></span><span class="name">Layer 1</span><span class="target"></span><span class="mark"></span></div>
  <div class="rest"></div>
  ${tabs(['SWATCHES'], '▸▸')}
  <div class="grid">${rows.map(r => `<div class="row">${r.map(v => `<button type="button" aria-label="Swatch" style="--c:${v}"></button>`).join('')}</div>`).join('')}</div>
  <div class="tools">${['libs','kind','opts','folder','add','trash'].map(n => `<button type="button" aria-label="${n}">${icon(n, 11)}</button>`).join('')}</div>`);

component('gradient-panel', `<style>
    :host { display: block; width: 150px; background: #d6d6d6; border: 1px solid #555; border-top: 0; font-size: 7px; line-height: 10px; }
    ${TABS}
    .body { display: grid; gap: 5px; padding: 3px 9px 4px 5px; height: 106px; align-content: start; }
    .r { display: flex; align-items: center; }
    .sw { width: 20px; height: 18px; border: 1px solid #444; background: linear-gradient(90deg, #eee, #444); }
    .dd { width: 5px; height: 18px; border: 1px solid #999; margin: 0 3px 0 1px; font-size: 4px; background: #eee; }
    .type { flex: 1; height: 11px; margin-left: 3px; border-radius: 3px; }
    .rev { width: 16px; height: 13px; border: 1px solid #aaa; margin: 0 17px 0 2px; }
    .num { width: 38px; height: 11px; border-color: #ccc; background-color: #dcdcdc; filter: grayscale(1); opacity: .6; }
    .ramp { width: 115px; height: 9px; margin-right: 7px; border: 1px solid #444; background: linear-gradient(90deg, #fff, #000); }
    .del { width: 12px; height: 11px; border: 1px solid #aaa; }
    .r label.off { width: 44px; text-align: right; padding-right: 2px; color: #8a8a8a; }
    .u { color: #888; padding-left: 2px; }
  </style>
  <div class="bar"><span>×</span><span>◂◂</span></div>
  ${tabs(['◊ GRADIENT'])}
  <div class="body">
    <div class="r"><button type="button" class="sw" aria-label="Gradient fill"></button><button type="button" class="dd" aria-label="Gradients">▼</button><label for="type">Type:</label><select id="type" class="type"><option></option></select></div>
    <div class="r"><button type="button" class="rev" aria-label="Reverse">${icon('reverse', 10)}</button>${icon('angle', 8)}<select class="num" aria-label="Angle" style="margin-left:6px"><option></option></select><span class="u">°</span><span style="padding-left:4px">${icon('aspect', 12)}</span><span class="u" style="margin-left:auto">%</span></div>
    <div class="r"><button type="button" class="ramp" aria-label="Gradient ramp"></button><button type="button" class="del" aria-label="Delete stop">${icon('trash', 9)}</button></div>
    <div class="r" style="padding-top:8px"><label class="off" for="op">Opacity:</label><select id="op" class="num" disabled><option></option></select><span class="u">%</span></div>
    <div class="r"><label class="off" for="loc">Location:</label><select id="loc" class="num" disabled><option></option></select><span class="u">%</span></div>
  </div>`);

component('illustrator-app', `<style>
    :host { display: flex; flex-direction: column; min-height: 100vh; }
    main { flex: 1; display: grid; grid-template-columns: 25px 1fr 24px; position: relative; }
    layers-panel { position: absolute; right: 25px; top: 0; }
    gradient-panel { position: absolute; right: 38px; top: 181px; }
  </style>
  <system-bar></system-bar><app-bar></app-bar><control-bar></control-bar>
  <main><tool-palette></tool-palette><document-window></document-window><panel-dock></panel-dock><layers-panel></layers-panel><gradient-panel></gradient-panel></main>`);
</script>
</body>
</html>
